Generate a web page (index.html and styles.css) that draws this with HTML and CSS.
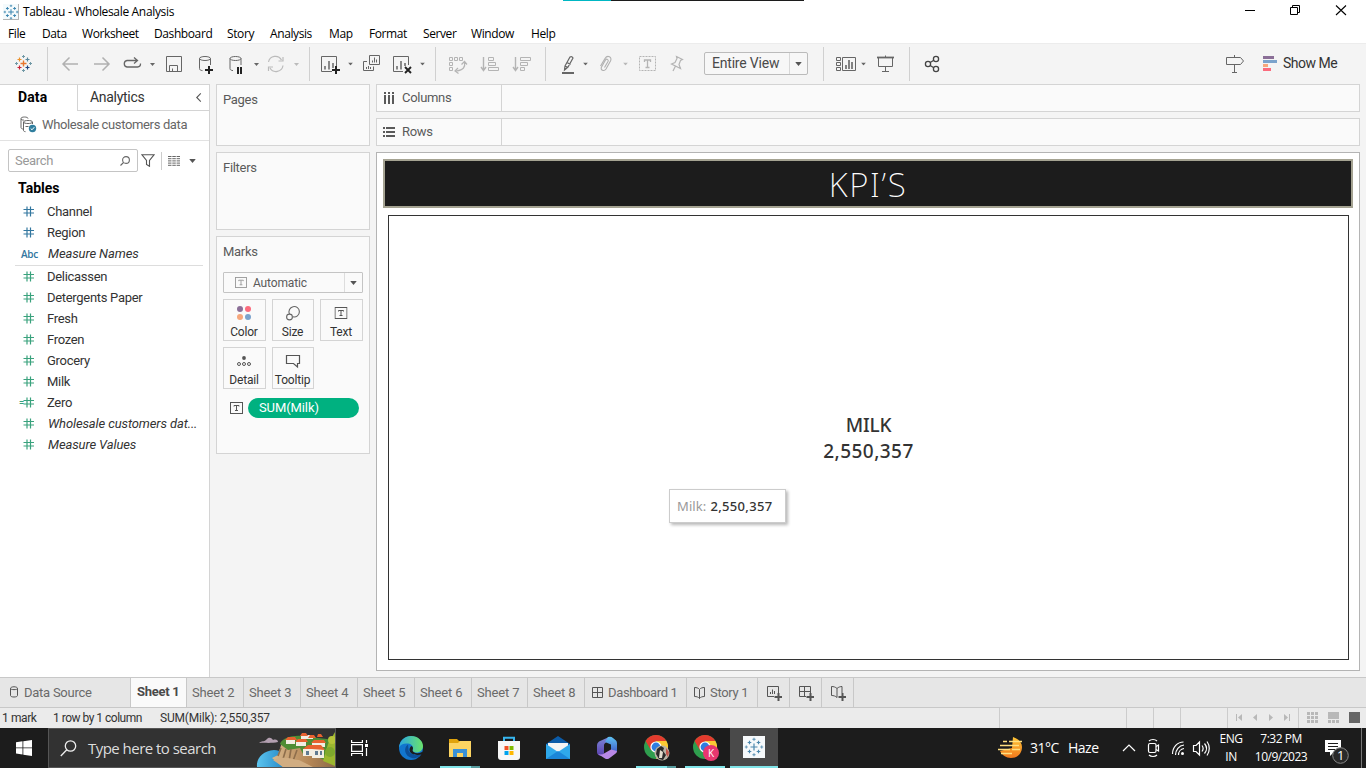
FILE: index.html
```html
<!DOCTYPE html>
<html lang="en">
<head>
<meta charset="utf-8">
<title>Tableau - Wholesale Analysis</title>
<link rel="stylesheet" href="styles.css">
</head>
<body>
<svg class="defs" width="0" height="0" aria-hidden="true">
  <symbol id="hash" viewBox="0 0 12 11"><path d="M4 .5v10M7.500 .5v10M.5 3.500h10.500M.5 7h10.500" fill="none" stroke="currentColor" stroke-width="1.200"/></symbol>
  <symbol id="caret" viewBox="0 0 5 3"><path d="M0 0h5L2.500 3z" fill="currentColor"/></symbol>
  <symbol id="tbox" viewBox="0 0 13 12"><rect x=".5" y=".5" width="12" height="11" fill="none" stroke="currentColor"/><path d="M4 4.500V3.500h5v1M6.500 3.500v5M5 8.500h3" fill="none" stroke="currentColor"/></symbol>
  <symbol id="plusgrid" viewBox="0 0 20 20">
    <path d="M10 6.500v7M6.500 10h7"/><path d="M5.500 3.700v3.600M3.700 5.500h3.600M14.500 3.700v3.600M12.700 5.500h3.600M5.500 12.700v3.600M3.700 14.500h3.600M14.500 12.700v3.600M12.700 14.500h3.600"/><path d="M10 .800v3M8.500 2.300h3M10 16.200v3M8.500 17.700h3M2.300 8.500v3M.800 10h3M17.700 8.500v3M16.200 10h3" opacity=".8"/>
  </symbol>
  <symbol id="chrome" viewBox="0 0 24 24"><circle cx="12" cy="12" r="12" fill="#2f9e4e"/><path d="M1.600 6A12 12 0 0 1 22.400 6H12L6.800 15z" fill="#e33b2e"/><path d="M22.400 6A12 12 0 0 1 12 24l5.200-9L12 6z" fill="#fcc934"/><circle cx="12" cy="12" r="5.600" fill="#fff"/><circle cx="12" cy="12" r="4.400" fill="#2f7de1"/></symbol>
</svg>

<div class="window">
  <header class="titlebar">
    <svg class="app-icon" width="16" height="16" viewBox="0 0 20 20"><rect width="20" height="20" fill="#f4fafc"/><path d="M19.500 0v19.500H0" fill="none" stroke="#999"/><use href="#plusgrid" stroke="#3c86b0" stroke-width="1.300"/></svg>
    <span class="app-title">Tableau - Wholesale Analysis</span>
    <div class="accent"><i></i></div>
    <svg class="winctl" width="120" height="22" viewBox="1240 0 120 22" fill="none" stroke="#000"><path d="M1245 10.500h10"/><path d="M1290.500 7.500h7v7h-7zM1292.500 7.500v-2h7v7h-2"/><path d="M1336 5.500l10 9.500M1346 5.500l-10 9.500" stroke-width="1.100"/></svg>
  </header>

  <nav class="menubar"><span>File</span><span>Data</span><span>Worksheet</span><span>Dashboard</span><span>Story</span><span>Analysis</span><span>Map</span><span>Format</span><span>Server</span><span>Window</span><span>Help</span></nav>

  <div class="toolbar">
    <svg width="47" height="34" viewBox="0 47 47 34" fill="none" stroke-width="1.200">
      <path d="M23.500 60.500v6M20.500 63.500h6" stroke="#e8762d" stroke-width="1.400"/><path d="M19.500 57.500v4M17.500 59.500h4" stroke="#eb912c"/><path d="M27.500 57.500v4M25.500 59.500h4" stroke="#59879b"/><path d="M19.500 65.500v4M17.500 67.500h4" stroke="#c72035"/><path d="M27.500 65.500v4M25.500 67.500h4" stroke="#1f447e"/><path d="M23.500 55v3M22 56.500h3M16.500 62v3M15 63.500h3M30.500 62v3M29 63.500h3M23.500 69v3M22 70.500h3" stroke="#7199a6" stroke-width="1"/>
    </svg>
    <i class="sep"></i>
    <svg width="38" height="34" viewBox="48 47 38 34" fill="none" stroke="#b0b0b0" stroke-width="1.500"><path d="M78 64H63M69.500 57.500L63 64l6.500 6.500"/></svg>
    <svg width="32" height="34" viewBox="86 47 32 34" fill="none" stroke="#b0b0b0" stroke-width="1.500"><path d="M94 64h15M102.500 57.500L109 64l-6.500 6.500"/></svg>
    <svg width="44" height="34" viewBox="118 47 44 34" fill="none" stroke="#666" stroke-width="1.300"><path d="M137.500 60.500H127a3.300 3.300 0 0 0 0 6.500h10.500a3.300 3.300 0 0 0 3-3.500M134 57.500l3.500 3-3.500 3"/><use href="#caret" x="150" y="63" width="5" height="3" color="#666" stroke="none"/></svg>
    <svg width="28" height="34" viewBox="162 47 28 34" fill="none" stroke="#666"><path d="M166.500 56.500h15v15h-15zM169.500 71.500v-6h8v6M172.500 71.500v-3"/></svg>
    <svg width="32" height="34" viewBox="190 47 32 34" fill="none" stroke="#666"><ellipse cx="205" cy="58.500" rx="5.500" ry="2"/><path d="M199.500 58.500v10c0 1.300 1 1.900 3 2.100M210.500 58.500V65"/><path d="M209 66v8M205 70h8" stroke="#222" stroke-width="2"/></svg>
    <svg width="42" height="34" viewBox="222 47 42 34" fill="none" stroke="#666"><ellipse cx="235.500" cy="58.500" rx="5.500" ry="2"/><path d="M230 58.500v10c0 1.300 1 1.900 3 2.100M241 58.500V65"/><path d="M238 67v7M241 67v7" stroke="#222" stroke-width="2"/><use href="#caret" x="254" y="63" width="5" height="3" color="#666" stroke="none"/></svg>
    <svg width="45" height="34" viewBox="264 47 45 34" fill="none" stroke="#bbb" stroke-width="1.200"><path d="M268.500 62a7 7 0 0 1 13-2M283 65.500a7 7 0 0 1-13 2.500M278.500 61h4.500v-4M273 67h-4.500v4"/><use href="#caret" x="294" y="63" width="5" height="3" color="#bbb" stroke="none"/></svg>
    <i class="sep"></i>
    <svg width="48" height="34" viewBox="310 47 48 34" fill="none" stroke="#666"><path d="M332 71.500h-10.500v-15h15V66"/><path d="M325 66v3.500M329 61v8.500M333 63v5" stroke-width="1.500"/><path d="M336 66v8M332 70h8" stroke="#222" stroke-width="2"/><use href="#caret" x="348" y="62.500" width="5" height="3" color="#666" stroke="none"/></svg>
    <svg width="28" height="34" viewBox="358 47 28 34" fill="none" stroke="#666"><path d="M369.500 55.500h10v9h-10zM367 61.500h-3.500v9h10v-4M372.500 62.500v-2M374.500 62.500v-5M376.500 62.500v-3M366.500 69v-2M368.500 69v-3M370.500 69v-2"/></svg>
    <svg width="49" height="34" viewBox="386 47 49 34" fill="none" stroke="#666"><path d="M403 71.500h-9.500v-15h15V65"/><path d="M397 66v3.500M401 61v8.500M405 63v3" stroke-width="1.500"/><path d="M405 67l6 6M411 67l-6 6" stroke="#222" stroke-width="1.900"/><use href="#caret" x="420" y="62.500" width="5" height="3" color="#666" stroke="none"/></svg>
    <i class="sep"></i>
    <svg width="38" height="34" viewBox="436 47 38 34" fill="none" stroke="#b4b4b4"><path d="M449.500 57.500h3v3h-3zM454.500 57.500h3v3h-3zM459.500 57.500h3v3h-3zM449.500 62.500h3v3h-3zM449.500 67.500h3v3h-3z"/><path d="M464.500 62c1 5-1 8-8 9M461.500 64.500l3-3 2.500 3M458 68l-3 3 3.500 2.500" stroke-width="1.200"/></svg>
    <svg width="32" height="34" viewBox="474 47 32 34" fill="none" stroke="#b4b4b4"><path d="M483.500 57v13M481 67l2.500 3.500L486 67" stroke-width="1.400"/><path d="M488.500 57.500h5v3h-5zM488.500 62.500h7v3h-7zM488.500 67.500h10v3h-10z"/></svg>
    <svg width="39" height="34" viewBox="506 47 39 34" fill="none" stroke="#b4b4b4"><path d="M515.500 57v13M513 67l2.500 3.500L518 67" stroke-width="1.400"/><path d="M520.500 57.500h10v3h-10zM520.500 62.500h7v3h-7zM520.500 67.500h4v3h-4z"/></svg>
    <i class="sep"></i>
    <svg width="48" height="34" viewBox="546 47 48 34" fill="none" stroke="#666"><path d="M565 66l5-9q2-1 3 1l-5 9-3.500 3zM567 62.500l3.500 2M565 66l3 1.500" stroke-width="1.200"/><path d="M562 73h12" stroke-width="2"/><use href="#caret" x="583" y="62.500" width="5" height="3" color="#666" stroke="none"/></svg>
    <svg width="39" height="34" viewBox="594 47 39 34" fill="none" stroke="#b0b0b0" stroke-width="1.100"><path d="M600.500 66l4.500-7.500c2.500-4 7.500-1.500 5.500 2.500l-4.500 8c-2 3-6 1-4.500-2l4-7c1-1.700 3.500-.5 2.500 1.500l-3.500 6"/><use href="#caret" x="623" y="62.500" width="5" height="3" stroke="none" color="#b8b8b8"/></svg>
    <svg width="29" height="34" viewBox="633 47 29 34" fill="none" stroke="#b4b4b4"><rect x="639.500" y="56.500" width="16" height="14" stroke-dasharray="2 1"/><path d="M644.500 62v-2h6v2M647.500 60v7M645.500 67.500h4" stroke-width="1.300"/></svg>
    <svg width="42" height="34" viewBox="662 47 42 34" fill="none" stroke="#b4b4b4" stroke-width="1.200"><path d="M676.500 56.500l6 3-2 1-1.500 4 1.500 4-9-4.500 3.500-1.500 2-4zM675.500 66l-2.500 5"/></svg>
    <div class="fit"><span>Entire View</span><b><svg width="7" height="4" viewBox="0 0 5 3" color="#555"><use href="#caret" width="5" height="3"/></svg></b></div>
    <i class="sep"></i>
    <svg width="46" height="34" viewBox="824 47 46 34" fill="none" stroke="#666"><path d="M836.500 57.500h4v3h-4zM836.500 62.500h4v3h-4zM836.500 67.500h4v3h-4zM842.500 57.500h13v13h-13z"/><path d="M846 65v4M849 60v9M852 62v7" stroke-width="1.600"/><use href="#caret" x="861" y="62.500" width="5" height="3" color="#666" stroke="none"/></svg>
    <svg width="39" height="34" viewBox="870 47 39 34" fill="none" stroke="#666"><path d="M877 57.500h17" stroke-width="1.800"/><path d="M878.500 58v8.500h14V58M885.500 66.500v5M882 71.500h7M885.500 55.500v2"/></svg>
    <i class="sep"></i>
    <svg width="40" height="34" viewBox="910 47 40 34" fill="none" stroke="#444" stroke-width="1.300"><circle cx="928" cy="64" r="2.600"/><circle cx="936" cy="59" r="2.600"/><circle cx="936" cy="69" r="2.600"/><path d="M930.200 62.500l3.600-2.200M930.200 65.500l3.600 2.200"/></svg>
    <div class="grow"></div>
    <svg width="40" height="34" viewBox="1215 47 40 34" fill="none" stroke="#666"><path d="M1226.500 57.500h14l3 3.500-3 3.500h-14zM1234.500 55v2.500M1234.500 64.500v8M1232 72.500h5"/></svg>
    <svg width="28" height="34" viewBox="1255 47 28 34"><path fill="#8b6f97" d="M1263 56h11v3h-11z"/><path fill="#7ba3cc" d="M1263 60h14v3h-14z"/><path fill="#f6a77c" d="M1263 64h5v3h-5z"/><path fill="#fb6b7d" d="M1263 68h8v3h-8z"/></svg>
    <span class="showme">Show Me</span>
  </div>

  <main class="body">
    <aside class="side">
      <div class="side-tabs"><b>Data</b><span>Analytics</span><svg width="8" height="10" viewBox="0 0 8 10" fill="none" stroke="#555" stroke-width="1.200"><path d="M6 .5L1.500 5 6 9.500"/></svg></div>
      <div class="source"><svg width="17" height="17" viewBox="0 0 17 17" fill="none" stroke="#666"><path d="M1 2.500C1 .5 8 .5 8 2.500M1 2.500v9c0 1 1 1.500 2.500 1.500M1 3c1 1.500 3 1 3 1M3.500 14.500V6c0-2 9-2 9 0v2M3.500 6c0 2 9 2 9 0M3.500 14.500c0 .8.800 1 2 1.200M5.500 10.500h3"/><circle cx="12.500" cy="12.500" r="3.700" fill="#2f7e9e" stroke="none"/><path d="M10.700 12.500l1.300 1.300 2.300-2.600" stroke="#fff"/></svg><span>Wholesale customers data</span></div>
      <div class="search-row">
        <div class="search"><span>Search</span><svg width="10" height="10" viewBox="0 0 10 10" fill="none" stroke="#666" stroke-width="1.100"><circle cx="6" cy="4" r="3.400"/><path d="M3.500 6.500L.5 9.500"/></svg></div>
        <svg class="funnel" width="14" height="13" viewBox="0 0 14 13" fill="none" stroke="#555" stroke-width="1.100"><path d="M.8.700h12.400L8.500 6.500v5.800l-3-1.800v-4z"/></svg>
        <i></i>
        <svg class="lines" width="12" height="10" viewBox="0 0 12 10" fill="none" stroke="#666"><path d="M0 .5h12M0 2.700h12M0 4.900h12M0 7.100h12M0 9.300h12" stroke-dasharray="3.500 .8"/></svg>
        <svg class="dd" width="7" height="4" viewBox="0 0 5 3" color="#555"><use href="#caret" width="5" height="3"/></svg>
      </div>
      <h2>Tables</h2>
      <ul class="fields dims">
        <li><svg><use href="#hash"/></svg>Channel</li>
        <li><svg><use href="#hash"/></svg>Region</li>
        <li><small>Abc</small><em>Measure Names</em></li>
      </ul>
      <ul class="fields meas">
        <li><svg><use href="#hash"/></svg>Delicassen</li>
        <li><svg><use href="#hash"/></svg>Detergents Paper</li>
        <li><svg><use href="#hash"/></svg>Fresh</li>
        <li><svg><use href="#hash"/></svg>Frozen</li>
        <li><svg><use href="#hash"/></svg>Grocery</li>
        <li><svg><use href="#hash"/></svg>Milk</li>
        <li class="calc"><svg><use href="#hash"/></svg>Zero</li>
        <li><svg><use href="#hash"/></svg><em>Wholesale customers dat...</em></li>
        <li><svg><use href="#hash"/></svg><em>Measure Values</em></li>
      </ul>
    </aside>

    <section class="cards">
      <div class="card pages">Pages</div>
      <div class="card filters">Filters</div>
      <div class="card marks">Marks
        <div class="marktype"><svg width="12" height="11" viewBox="0 0 13 12" color="#999"><use href="#tbox"/></svg><span>Automatic</span><b><svg width="7" height="4" viewBox="0 0 5 3" color="#555"><use href="#caret" width="5" height="3"/></svg></b></div>
        <div class="btns">
          <div><svg width="24" height="16" viewBox="0 0 24 16"><circle cx="8" cy="4" r="3" fill="#8b6f97"/><circle cx="16" cy="4" r="3" fill="#fb6b7d"/><circle cx="8" cy="12" r="3" fill="#f6a77c"/><circle cx="16" cy="12" r="3" fill="#7ba3cc"/></svg><span>Color</span></div>
          <div><svg width="24" height="16" viewBox="0 0 24 16" fill="none" stroke="#666" stroke-width="1.100"><path d="M8.500 9a5.200 5.200 0 1 1 3.500 2.800"/><circle cx="8.500" cy="12" r="2.900"/></svg><span>Size</span></div>
          <div><svg width="24" height="16" viewBox="0 0 24 16" color="#555"><use href="#tbox" x="5.500" y="2" width="13" height="12"/></svg><span>Text</span></div>
          <div><svg width="24" height="16" viewBox="0 0 24 16" fill="none" stroke="#555"><circle cx="12" cy="5" r="1.900" fill="#555" stroke="none"/><circle cx="7" cy="11" r="1.500"/><circle cx="12" cy="11" r="1.500"/><circle cx="17" cy="11" r="1.500"/></svg><span>Detail</span></div>
          <div><svg width="24" height="16" viewBox="0 0 24 16" fill="none" stroke="#555" stroke-width="1.200"><path d="M5.500 2.500h13v8h-2v3.500l-4-3.500h-7z"/></svg><span>Tooltip</span></div>
        </div>
        <div class="pillrow"><svg width="13" height="12" viewBox="0 0 13 12" color="#555"><use href="#tbox"/></svg><span class="pill">SUM(Milk)</span></div>
      </div>
    </section>

    <section class="work">
      <div class="shelf"><div><svg width="12" height="12" viewBox="0 0 12 12" fill="#5a5a5a"><path d="M1 0h2v2H1zM5 0h2v2H5zM9 0h2v2H9zM1 3h2v9H1zM5 3h2v9H5zM9 3h2v9H9z"/></svg>Columns</div></div>
      <div class="shelf"><div><svg width="12" height="12" viewBox="0 0 12 12" fill="#5a5a5a"><path d="M0 1h2v2H0zM3 1h9v2H3zM0 5h2v2H0zM3 5h9v2H3zM0 9h2v2H0zM3 9h9v2H3z"/></svg>Rows</div></div>
      <div class="view">
        <h1>KPI’S</h1>
        <div class="chart">
          <div class="kpi"><span>MILK</span><span class="num">2,550,357</span></div>
          <div class="tip"><span>Milk:</span><b>2,550,357</b></div>
        </div>
      </div>
    </section>
  </main>

  <div class="tabs">
    <div class="ds"><svg width="10" height="12" viewBox="0 0 10 12" fill="none" stroke="#555"><path d="M1.500 2.500v7c0 2 7 2 7 0v-7c0-2.300-7-2.300-7 0c0 1.500 7 1.500 7 0"/></svg>Data Source</div>
    <div class="t56 on">Sheet 1</div><div>Sheet 2</div><div>Sheet 3</div><div>Sheet 4</div><div>Sheet 5</div><div>Sheet 6</div><div class="t56">Sheet 7</div><div>Sheet 8</div>
    <div class="dash"><svg width="12" height="12" viewBox="0 0 12 12" fill="none" stroke="#555"><path d="M.5.500h10v10H.5zM5.500 .5v10M.5 5.500h10"/></svg>Dashboard 1</div>
    <div class="story"><svg width="12" height="12" viewBox="0 0 12 12" fill="none" stroke="#555"><path d="M.5.500c2 0 4 .5 5 2 1-1.500 3-2 5-2v9c-2 0-4 .5-5 2-1-1.500-3-2-5-2zM5.500 2.500v9"/></svg>Story 1</div>
    <div class="new"><svg width="15" height="15" viewBox="0 0 15 15" fill="none" stroke="#555"><path d="M7 10.500H.5V.5h11V7M3.500 8V6M5.500 8V3.500M7.500 8V5"/><path d="M11.500 7v8M7.500 11h8" stroke-width="2"/></svg></div>
    <div class="new"><svg width="15" height="15" viewBox="0 0 15 15" fill="none" stroke="#555"><path d="M7 10.500H.5V.5h11V7M5.500.500v10M.5 5.500h11"/><path d="M11.500 7v8M7.500 11h8" stroke-width="2"/></svg></div>
    <div class="new"><svg width="15" height="15" viewBox="0 0 15 15" fill="none" stroke="#555"><path d="M6 11.500c-1.500-1.500-3.500-2-5.500-2v-9c2 0 4 .5 5.500 2 1.500-1.500 3.500-2 5-2V7M6 2.500v9"/><path d="M11.500 7v8M7.500 11h8" stroke-width="2"/></svg></div>
  </div>

  <div class="status">
    <span class="s1">1 mark</span><span class="s2">1 row by 1 column</span><span class="s3">SUM(Milk): 2,550,357</span>
    <svg width="367" height="20" viewBox="999 708 367 20"><path d="M999.500 708v20M1126.500 708v20M1153.500 708v20M1180.500 708v20M1227.500 708v20M1298.500 708v20" stroke="#ccc"/><path d="M1236 714h1v7h-1zM1242 714v7l-4-3.500zM1257 714v7l-4-3.500zM1269 714v7l4-3.500zM1284 714v7l4-3.500zM1289 714h1v7h-1z" fill="#b8b8b8"/><path d="M1307 712h3v3h-3zM1311 712h3v3h-3zM1315 712h3v3h-3zM1307 716h3v3h-3zM1311 716h3v3h-3zM1315 716h3v3h-3zM1307 720h3v3h-3zM1311 720h3v3h-3zM1315 720h3v3h-3zM1328 712h11v7h-11zM1328 720h3v3h-3zM1332 720h3v3h-3zM1336 720h3v3h-3z" fill="#b8b8b8"/><path d="M1349 712h11v11h-11z" fill="#666"/></svg>
  </div>

  <footer class="taskbar">
    <div class="start"><svg width="16" height="16" viewBox="0 0 16 16" fill="#fff"><path d="M0 2.200l6.500-.9v6.200H0zM7.300 1.200L16 0v7.500H7.300zM0 8.300h6.500v6.200L0 13.600zM7.300 8.300H16V16l-8.700-1.200z"/></svg></div>
    <div class="tsearch">
      <svg width="17" height="17" viewBox="0 0 17 17" fill="none" stroke="#eee" stroke-width="1.300"><circle cx="10.500" cy="6" r="5.200"/><path d="M6.800 9.800L.8 16"/></svg><span>Type here to search</span>
      <svg class="pic" width="80" height="38" viewBox="256 729 80 38">
        <defs><linearGradient id="sea" x1="0" x2="1"><stop offset="0" stop-color="#5cc4ee"/><stop offset="1" stop-color="#1779bd"/></linearGradient><linearGradient id="rock" x1="0" x2="1"><stop offset="0" stop-color="#d9b88c"/><stop offset=".6" stop-color="#b48656"/><stop offset="1" stop-color="#8b6a48"/></linearGradient></defs>
        <path d="M258 767c-1-9 6-16 17-17 8 0 15 6 18 17z" fill="url(#sea)"/>
        <path d="M260 743c3-2.500 5-1 7-3 3-4 6-2 7 0 3-1 5 0 5 2-6 1.500-13 .5-19 1z" fill="#b39fb0"/>
        <path d="M284 767l-11-9 6-3 4-13 29-2 24 8v19z" fill="url(#rock)"/>
        <path d="M281 744c2-6 12-9 22-8l33 4v22l-8-1-10-4-14-3-3-6-12 2z" fill="#4f8d35"/>
        <path d="M282 748l-3 8M287 749l-3 10M292 749l-2 12M298 750l-4 11" stroke="#8e6e4c" stroke-width="1.600"/>
        <path d="M274 760c12-5 20 0 26 0l14 7h-30z" fill="#d1ad82"/>
        <path d="M329 744l7-12v34l-12-5z" fill="#9cb72f"/><circle cx="331" cy="752" r="5" fill="#7fa92d"/><circle cx="333" cy="740" r="4" fill="#b6c43a"/>
        <path d="M287 740h9v4h-9zM297 741h10v5h-10zM302 735h12v4h-12zM313 742h13v5h-13zM304 749h9v7h-9zM313 749h12v9h-12z" fill="#f3ede2"/>
        <path d="M286 740l3-3h7l2 3zM296 742l3-3h8l2 3zM301 736l2-3h4l2 3zM309 738l2-3h4l2 3zM312 743l3-3h10l2 3zM304 749l5-4h13l4 5-13-1zM318 737l1-3h3l2 3z" fill="#e8622f"/>
        <path d="M307 751h3v4h-3zM316 751h3v4h-3zM321 751h2v4h-2z" fill="#607a91"/>
      </svg>
    </div>
    <div class="app tv"><svg width="18" height="16" viewBox="0 0 18 16" fill="none" stroke="#fff" stroke-width="1.200"><path d="M.6 0v2.500h10.800V0M.6 16v-2.500h10.800V16M.6 4.600h10.800v6.800H.6zM15.500 0v3M15.500 8v8"/><path d="M14 4h3v3h-3z" fill="#fff" stroke="none"/></svg></div>
    <div class="app"><svg width="24" height="24" viewBox="0 0 24 24"><defs><linearGradient id="e1" x1="0" x2="1"><stop offset="0" stop-color="#2aa7e0"/><stop offset="1" stop-color="#6be36b"/></linearGradient></defs><circle cx="12" cy="12" r="12" fill="#1276ce"/><path d="M0 11.500C1 4 6 0 12 0c7 0 12 5 12 10 0 4-3 6.500-6.500 6.500-3 0-4.500-1-4-2.500C15 11 13 8 9 7.500 5 7 1.500 8.500 0 11.500z" fill="url(#e1)"/><path d="M9 8.500c-5 3-3.500 12 4 13.500 4 1 8-1.500 9-4-4 2-13 .5-12.500-5z" fill="#0c4f99"/><path d="M13.500 14c0 3 5 4.500 9.500 2l1 0-1 2.200c-4 1.500-12 1-12.500-4.200 0-2 1-3.500 2-4 1.500 1 2 2.500 1 4z" fill="#1c1c1c"/></svg></div>
    <div class="app run multi"><svg width="22" height="20" viewBox="0 0 22 20"><path d="M0 1h8l2 2h12v16H0z" fill="#e0a30c"/><path d="M0 5h9l2-2h11v16H0z" fill="#fcd462"/><path d="M4 19v-8h14v8h-4v-4H8v4z" fill="#3991d8"/></svg></div>
    <div class="app"><svg width="24" height="24" viewBox="0 0 24 24"><path d="M7 6V1.700h10V6" fill="none" stroke="#37b6ef" stroke-width="2"/><path d="M1 5h22v16q0 3-3 3H4q-3 0-3-3z" fill="#f7f7f7"/><path d="M7.500 10h4v4h-4z" fill="#f05125"/><path d="M12.500 10h4v4h-4z" fill="#7fbb00"/><path d="M7.500 15h4v4h-4z" fill="#00a3ee"/><path d="M12.500 15h4v4h-4z" fill="#ffb800"/></svg></div>
    <div class="app"><svg width="24" height="24" viewBox="0 0 24 24"><path d="M0 8l12-8 12 8v15H0z" fill="#0b5ba8"/><path d="M2 7h20v6l-10 5L2 13z" fill="#f4f4f4"/><path d="M0 8l12 8 12-8v15H0z" fill="#2fa8ea"/><path d="M0 23l12-8L24 23z" fill="#1b86d8"/></svg></div>
    <div class="app"><svg width="22" height="24" viewBox="0 0 22 24"><defs><linearGradient id="m1" y2="1" x2="0"><stop offset="0" stop-color="#7d88d8"/><stop offset="1" stop-color="#5a3fae"/></linearGradient><linearGradient id="m2" y2="1" x2="0"><stop offset="0" stop-color="#5ec3f2"/><stop offset="1" stop-color="#3f52c4"/></linearGradient></defs><path d="M13 1L3 5.500Q1 7 1 9v7q0 3 4 4l3-2.500V9q0-2 5-4z" fill="url(#m1)"/><path d="M12 1q3-1 5 1l3 2.500q1 1 1 3V15l-3 3-3-2V8.500L9 6z" fill="url(#m2)"/><path d="M21 15q0 2-2 3l-6 4.500q-2 1-4 0L2 18q4 1 6-.5l7-4z" fill="#b988e6"/></svg></div>
    <div class="app run multi"><svg width="30" height="28" viewBox="-3 -1 30 28"><use href="#chrome" width="24" height="24"/><circle cx="18" cy="18" r="7.500" fill="#b9b3a5"/><path d="M13 14l4-3 3 2-1 3 3 4-3 5-4-1-3-5z" fill="#2b2a2a"/><path d="M16 15l3 2-1 6h-3z" fill="#e3dccd"/><path d="M22 13l3 4-1 5-2-3z" fill="#c4554b"/></svg></div>
    <div class="app run"><svg width="30" height="28" viewBox="-3 -1 30 28"><use href="#chrome" width="24" height="24"/><circle cx="18" cy="18" r="8" fill="#e8366f"/><text x="18" y="21.700" text-anchor="middle" class="kbadge">K</text></svg></div>
    <div class="app active"><svg width="22" height="22" viewBox="-1 -1 22 22"><path d="M-1-1h22v22H-1z" fill="#f6f9fb"/><use href="#plusgrid" width="20" height="20" stroke="#4b87ad" stroke-width="1.200"/></svg></div>
    <div class="grow"></div>
    <svg width="32" height="40" viewBox="996 728 32 40"><defs><linearGradient id="hz" y2="1" x2="0"><stop offset="0" stop-color="#ffc636"/><stop offset="1" stop-color="#f0781d"/></linearGradient></defs><path d="M1013 737c6 2 9 6 9 10 0 6-4 11-11 11-5 0-9-3-11-7l12-3z" fill="url(#hz)"/><path d="M1003 741.500h4M1009 741.500h13M1000 745.500h19M998 749.500h12M1012 749.500h8M1001 753.500h11" stroke="#ffdf80" stroke-width="1.600"/></svg>
    <span class="temp">31°C</span><span class="haze">Haze</span>
    <svg width="99" height="40" viewBox="1116 728 99 40" fill="none" stroke="#fff" stroke-width="1.200"><path d="M1123 751l6-6 6 6"/><rect x="1148.500" y="743.500" width="7.500" height="9" rx="1.500"/><path d="M1156 746.500l2.500-1.500v6l-2.500-1.500M1149 741c2-2 6-2 8 0M1149 755c2 2 6 2 8 0"/><path d="M1172.500 754c0-7 5-12 11-12M1175.500 755c0-5 3.500-9.500 8.500-10M1178.500 755c0-3 2-6 5.500-6.500"/><circle cx="1182.500" cy="753.500" r="1.500" fill="#fff" stroke="none"/><path d="M1193.500 745.500h2.500l3.500-3.500v13l-3.500-3.500h-2.500zM1202 745.500c1.500 2 1.500 4 0 6M1204.500 743.500c2.500 3 2.500 7 0 10M1207 741.500c3 4 3 10 0 14"/></svg>
    <div class="lang"><span>ENG</span><span>IN</span></div>
    <div class="clock"><span>7:32 PM</span><span>10/9/2023</span></div>
    <svg class="note" width="46" height="40" viewBox="1320 728 46 40"><path d="M1325 740h16v12h-7l-4 4v-4h-5z" fill="#fff"/><path d="M1328 743.500h10M1328 746.500h10M1328 749.500h7" stroke="#1c1c1c"/><circle cx="1340.500" cy="755.500" r="7.800" fill="#2a2a2a" stroke="#888"/><text x="1340.500" y="760" text-anchor="middle">1</text><path d="M1361.500 728v40" stroke="#777"/></svg>
  </footer>
</div>
</body>
</html>
```
FILE: styles.css
```css
* { box-sizing: border-box; }
body { margin: 0; font: 13px/16px Roboto, "Open Sans", sans-serif; letter-spacing: -.3px; color: #333; }
svg { display: block; flex: none; }
.defs { position: absolute; }
.window { width: 1366px; height: 768px; overflow: hidden; display: flex; flex-direction: column; background: #f4f4f4; }
.grow { flex: 1; }

.titlebar { height: 24px; background: #fff; display: flex; align-items: flex-start; font: 12px/24px "Open Sans", sans-serif; letter-spacing: -.33px; color: #000; }
.app-icon { margin: 4px 4px 0 3px; }
.app-title { width: 540px; }
.accent { width: 241px; height: 1px; background: #1c1c1c; }
.accent i { display: block; width: 48px; height: 1px; background: #00b7c3; }
.winctl { margin-left: auto; margin-right: 6px; }

.menubar { height: 19px; background: #fff; padding-left: 8px; display: grid; grid-template-columns: 34px 40px 72px 73px 43px 59px 40px 54px 48px 60px auto; font: 12px/19px "Open Sans", sans-serif; letter-spacing: -.4px; color: #000; }

.toolbar { height: 41px; border-top: 1px solid #ececec; padding: 3px 0; display: flex; align-items: flex-start; }
.sep { width: 1px; height: 34px; background: #d0d0d0; }
.fit { width: 104px; height: 23px; margin: 5px 15px 0 0; border: 1px solid #bbb; border-radius: 2px; background: #f7f7f7; display: flex; font-size: 14px; line-height: 21px; letter-spacing: -.2px; color: #4a4a4a; }
.fit span { width: 84px; padding-left: 7px; }
.fit b { flex: 1; border-left: 1px solid #d8d8d8; display: grid; place-items: center; }
.showme { width: 83px; font-size: 14px; line-height: 33px; letter-spacing: -.5px; }

.body { height: 593px; display: flex; }
.side { width: 210px; background: #fff; border-right: 1px solid #d4d4d4; border-top: 1px solid #d4d4d4; }
.side-tabs { height: 26px; display: flex; font-size: 14px; line-height: 25px; color: #333; }
.side-tabs b { width: 77px; padding-left: 18px; color: #000; letter-spacing: .1px; }
.side-tabs span { flex: 1; padding-left: 12px; border-left: 1px solid #d4d4d4; border-bottom: 1px solid #d4d4d4; background: #fff; }
.side-tabs svg { width: 14px; height: 26px; padding: 8px 6px 8px 0; border-bottom: 1px solid #d4d4d4; }
.source { height: 30px; border-bottom: 1px solid #e2e2e2; display: flex; padding: 5px 0 0 20px; gap: 5px; color: #666; line-height: 18px; letter-spacing: -.36px; }
.search-row { display: flex; align-items: center; padding: 8px 0 0 8px; height: 31px; }
.search { width: 130px; height: 23px; border: 1px solid #c4c4c4; border-radius: 2px; display: flex; align-items: center; justify-content: space-between; padding: 0 7px 0 6px; color: #999; }
.funnel { margin-left: 3px; }
.search-row i { width: 1px; height: 18px; margin: 0 6px; background: #ccc; }
.dd { margin-left: 9px; }
h2 { margin: 0; padding: 7px 0 0 18px; height: 29px; font-size: 14px; line-height: 18px; letter-spacing: 0; color: #000; }
.fields { list-style: none; margin: 0; padding: 0; }
.fields li { height: 21px; display: flex; align-items: center; padding-left: 23px; }
.fields svg { width: 12px; height: 11px; margin-right: 12px; }
.fields em { padding-left: 1px; letter-spacing: -.12px; }
.dims { height: 65px; border-bottom: 1px solid #ddd; width: 188px; margin-left: 15px; }
.dims li { padding-left: 8px; }
.dims svg { color: #33779f; }
.dims small { width: 26px; margin-left: -2px; font: 600 10px "Open Sans", sans-serif; letter-spacing: -.3px; color: #33779f; }
.meas svg { color: #3aa27d; }
.calc::before { content: "="; width: 4px; margin-left: -4px; font-size: 9px; font-weight: bold; color: #3aa27d; }

.cards { width: 166px; padding-left: 6px; display: flex; flex-direction: column; gap: 6px; color: #5a5a5a; }
.card { width: 154px; border: 1px solid #d4d4d4; background: #fafafa; padding: 7px 6px 0; letter-spacing: -.3px; }
.pages { height: 62px; }
.filters { height: 78px; }
.marks { height: 218px; }
.marktype { width: 140px; height: 21px; margin-top: 12px; border: 1px solid #c4c4c4; border-radius: 1px; display: flex; align-items: center; padding-left: 11px; font-size: 12px; gap: 6px; letter-spacing: -.15px; }
.marktype span { width: 85px; }
.marktype b { flex: 1; height: 19px; border-left: 1px solid #ddd; display: grid; place-items: center; }
.btns { margin-top: 6px; display: grid; grid-template-columns: 43px 42px 43px; gap: 6px; }
.btns div { height: 42px; border: 1px solid #d4d4d4; display: flex; flex-direction: column; align-items: center; padding: 5px 1px 0 0; font-size: 12px; letter-spacing: -.2px; color: #333; }
.btns span { margin-top: 3px; }
.pillrow { margin: 9px 0 0 7px; display: flex; align-items: center; gap: 5px; }
.pill { width: 111px; height: 20px; border-radius: 10px; background: #00b180; color: #fff; padding-left: 11px; line-height: 20px; letter-spacing: -.1px; }

.work { display: flex; flex-direction: column; gap: 6px; }
.shelf { width: 984px; height: 28px; border: 1px solid #d4d4d4; background: #fafafa; color: #5a5a5a; }
.shelf div { width: 125px; height: 26px; border-right: 1px solid #d4d4d4; padding-left: 6px; display: flex; align-items: center; gap: 7px; }
.view { width: 984px; height: 519px; border: 1px solid #b4b4b4; background: #fff; padding: 6px; }
h1 { margin: 0; width: 970px; height: 49px; border: 2px solid #a5a392; background: #1c1c1c; color: #fff; text-align: center; font: 200 33px/47px "Noto Sans", "Open Sans", sans-serif; letter-spacing: 1.7px; }
.chart { position: relative; margin: 7px 0 0 5px; width: 961px; height: 445px; border: 1px solid #333; }
.kpi { padding-top: 196px; display: flex; flex-direction: column; font: 500 19px/26px "Noto Sans", sans-serif; letter-spacing: -.2px; color: #333; text-align: center; }
.kpi .num { letter-spacing: .45px; }
.tip { position: absolute; left: 280px; top: 273px; width: 117px; height: 34px; border: 1px solid #ccc; background: #fff; box-shadow: 2px 2px 3px rgba(0,0,0,.28); padding-left: 7px; display: flex; gap: 4px; font: 13px/33px "Noto Sans", sans-serif; color: #999; letter-spacing: .1px; }
.tip b { font-weight: 500; color: #333; letter-spacing: .32px; }

.tabs { height: 31px; border-top: 1px solid #c8c8c8; border-bottom: 1px solid #c8c8c8; background: #e6e6e6; display: flex; color: #6a6a6a; }
.tabs div { width: 57px; border-right: 1px solid #c8c8c8; padding-left: 5px; line-height: 30px; display: flex; align-items: center; letter-spacing: -.15px; }
.tabs .ds { width: 131px; padding-left: 9px; gap: 5px; letter-spacing: -.25px; }
.tabs .ds svg { margin-top: -2px; }
.tabs .t56 { width: 56px; }
.tabs .on { background: #fafafa; font-weight: bold; line-height: 27px; align-items: flex-start; padding-left: 6px; color: #4a4a4a; letter-spacing: -.3px; }
.tabs .dash { width: 102px; padding-left: 7px; gap: 4px; letter-spacing: -.35px; }
.tabs .story { width: 71px; padding-left: 7px; gap: 4px; letter-spacing: -.3px; }
.tabs .new { width: 32px; padding: 1px 0 0 9px; }

.status { height: 20px; background: #ebebeb; display: flex; font-size: 12px; line-height: 20px; color: #333; }
.s1 { width: 51px; }
.s1, .s2 { padding-left: 2px; letter-spacing: -.4px; }
.s2 { width: 109px; letter-spacing: -.5px; }
.s3 { letter-spacing: -.2px; }
.status svg { margin-left: auto; }

.taskbar { height: 40px; background: #1c1c1c; display: flex; color: #fff; font-family: "Open Sans", sans-serif; }
.start { width: 48px; display: grid; place-items: center; }
.tsearch { width: 288px; border: 1px solid #555; background: #323232; display: flex; align-items: center; padding-left: 11px; font-size: 15px; letter-spacing: -.53px; color: #ddd; }
.tsearch span { width: 168px; margin-left: 11px; }
.app { width: 48px; margin-right: 1px; display: grid; place-items: center; }
.tv { margin-right: 3px; }
.run { background: linear-gradient(#80e4e8, #80e4e8) 4px 100% / 40px 2px no-repeat; }
.multi { background-image: linear-gradient(90deg, #80e4e8 31px, #579b9e 31px); }
.active { background: #4a4a4a; border-bottom: 2px solid #80e4e8; }
.kbadge { font: 10px "Open Sans", sans-serif; fill: #fff; }
.temp, .haze { font-size: 14px; line-height: 40px; letter-spacing: -.5px; }
.temp { width: 40px; padding-left: 2px; }
.haze { width: 48px; }
.lang, .clock { display: flex; flex-direction: column; font-size: 12px; line-height: 18px; padding-top: 2px; text-align: center; letter-spacing: -.5px; }
.lang { width: 32px; }
.clock { width: 68px; }
.note { margin-left: 5px; }
.note text { font: 13px "Open Sans", sans-serif; fill: #fff; }
```
